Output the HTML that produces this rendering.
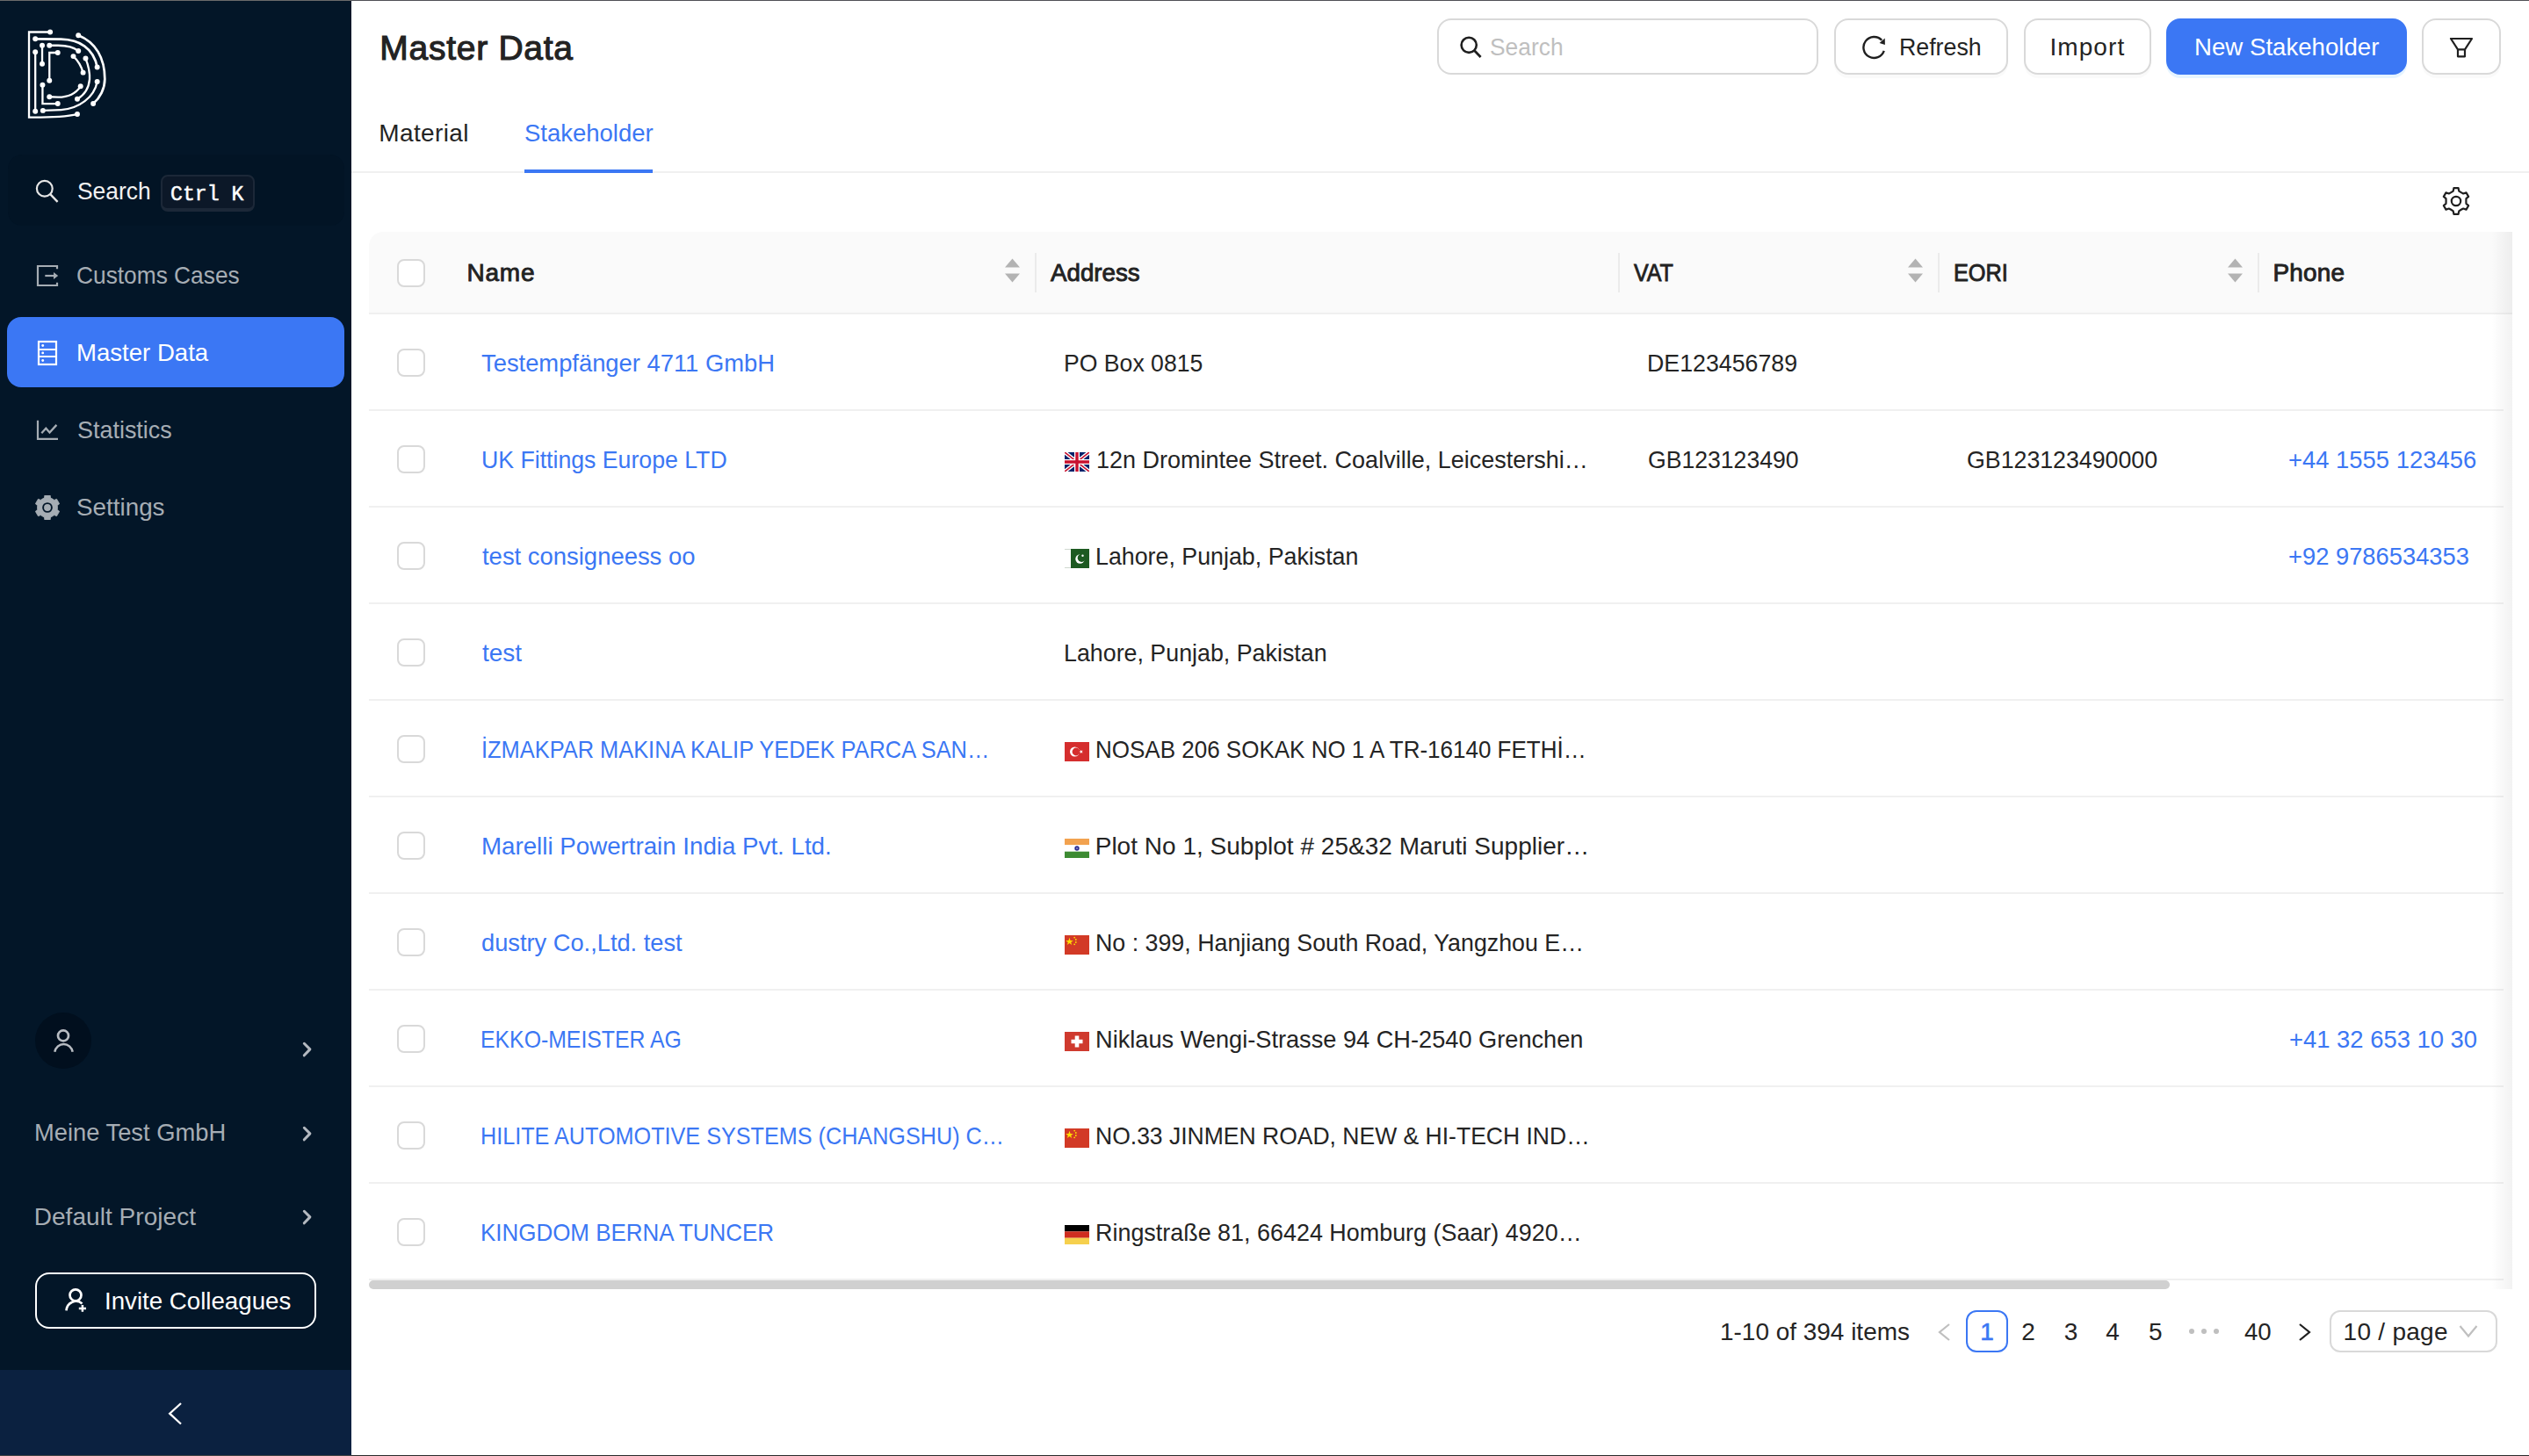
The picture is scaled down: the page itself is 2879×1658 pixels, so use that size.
<!DOCTYPE html>
<html><head><meta charset="utf-8"><title>Master Data</title>
<style>
html,body{margin:0;padding:0;width:2879px;height:1658px;overflow:hidden;background:#fff;}
body{position:relative;font-family:"Liberation Sans",sans-serif;}
.a{position:absolute;}
.t{position:absolute;white-space:nowrap;}
svg.a{display:block;}
</style></head><body>
<div class="a" style="left:0px;top:0px;width:400px;height:1658px;background:#031628;"></div>
<svg class="a" style="left:20px;top:20px;" width="120" height="120" viewBox="0 0 1456 1456"><g fill="none" stroke="#fff" stroke-width="28"><path d="M450 200 L158 200 L158 1378 C 420 1380 660 1372 825 1335"/><path d="M245 295 L600 300 C 850 305 1050 420 1100 685" stroke-width="33"/><path d="M840 245 C 1080 340 1205 560 1205 850 C 1205 980 1140 1110 1045 1190" stroke-width="33"/><path d="M245 475 L245 1295"/><path d="M340 385 L340 640"/><path d="M440 385 L560 385 C 680 385 780 410 840 462"/><path d="M555 485 L440 485 L440 870"/><path d="M770 535 C 830 590 880 670 905 760"/><path d="M940 565 C 985 680 1000 760 995 850 C 985 970 920 1070 825 1125"/><path d="M350 1285 L600 1275 C 850 1260 1060 1100 1100 885"/><path d="M345 930 L345 1190 L555 1190"/><path d="M440 1095 L560 1100 C 700 1100 810 1040 870 950"/></g><g fill="#fff"><circle cx="450" cy="200" r="36"/><circle cx="825" cy="1335" r="36"/><circle cx="245" cy="295" r="36"/><circle cx="1100" cy="685" r="36"/><circle cx="840" cy="245" r="36"/><circle cx="1045" cy="1190" r="36"/><circle cx="245" cy="475" r="36"/><circle cx="245" cy="1295" r="36"/><circle cx="340" cy="385" r="36"/><circle cx="340" cy="640" r="36"/><circle cx="440" cy="385" r="36"/><circle cx="840" cy="462" r="36"/><circle cx="555" cy="485" r="36"/><circle cx="440" cy="870" r="36"/><circle cx="770" cy="535" r="36"/><circle cx="905" cy="760" r="36"/><circle cx="940" cy="565" r="36"/><circle cx="825" cy="1125" r="36"/><circle cx="350" cy="1285" r="36"/><circle cx="1100" cy="885" r="36"/><circle cx="345" cy="930" r="36"/><circle cx="555" cy="1190" r="36"/><circle cx="440" cy="1095" r="36"/><circle cx="870" cy="950" r="36"/></g></svg>
<div class="a" style="left:9px;top:176px;width:383px;height:81px;background:#021425;border-radius:16px;"></div>
<svg class="a" style="left:38px;top:202px;" width="32" height="32" viewBox="0 0 32 32"><circle cx="12.8" cy="12.8" r="8.9" fill="none" stroke="#e6e6e6" stroke-width="2.2"/><path d="M19.2 19.2 L27.6 27.8" stroke="#e6e6e6" stroke-width="2.4"/></svg>
<div class="t" style="left:87.5px;top:197.60px;font-size:28px;line-height:40px;color:#f2f2f2;transform:scaleX(0.9436);transform-origin:0 0;">Search</div>
<div class="a" style="left:183px;top:199px;width:107px;height:42px;background:#0c1828;border:2px solid #1c2838;border-bottom-width:4px;border-radius:8px;box-sizing:border-box;"></div>
<div class="t" style="left:194.22px;top:201.80px;font-size:23.5px;line-height:40px;color:#ffffff;font-family:'Liberation Mono', monospace;-webkit-text-stroke:0.5px #fff;transform:scaleX(0.9845);transform-origin:0 0;">Ctrl K</div>
<svg class="a" style="left:40px;top:300px;" width="28" height="28" viewBox="0 0 28 28"><path d="M25 6.2 V3 H3 V25 H25 V21.8" fill="none" stroke="#a6adb4" stroke-width="2.2"/><path d="M11.3 14 H22" stroke="#a6adb4" stroke-width="2.2"/><path d="M21 10 L26.2 14 L21 18 Z" fill="#a6adb4"/></svg>
<div class="t" style="left:87.26px;top:294.00px;font-size:28px;line-height:40px;color:#a6adb4;transform:scaleX(0.9396);transform-origin:0 0;">Customs Cases</div>
<div class="a" style="left:8px;top:361px;width:384px;height:80px;background:#3b77f4;border-radius:16px;"></div>
<svg class="a" style="left:40px;top:385px;" width="28" height="34" viewBox="0 0 28 34"><rect x="4" y="4" width="20" height="26" fill="none" stroke="#fff" stroke-width="2.2"/><path d="M4 12.9 H24 M4 21.1 H24" stroke="#fff" stroke-width="2"/><circle cx="8.7" cy="8.5" r="1.4" fill="#fff"/><circle cx="8.7" cy="16.9" r="1.4" fill="#fff"/><circle cx="8.7" cy="25.5" r="1.4" fill="#fff"/></svg>
<div class="t" style="left:87.14px;top:382.00px;font-size:28px;line-height:40px;color:#ffffff;transform:scaleX(0.9847);transform-origin:0 0;">Master Data</div>
<svg class="a" style="left:40px;top:476px;" width="28" height="28" viewBox="0 0 28 28"><path d="M3 2.8 V23.8 H26" fill="none" stroke="#a6adb4" stroke-width="2.2"/><path d="M7.3 17.2 L12.3 11.8 L16.5 16.5 L24.4 7.9" fill="none" stroke="#a6adb4" stroke-width="2.3"/></svg>
<div class="t" style="left:87.53px;top:470.00px;font-size:28px;line-height:40px;color:#a6adb4;transform:scaleX(0.9618);transform-origin:0 0;">Statistics</div>
<svg class="a" style="left:40px;top:564px;" width="28" height="28" viewBox="0 0 28 28"><path d="M10.40 3.00 L10.90 -0.00 L17.10 0.00 L17.60 3.00 Q19.80 3.95 21.73 5.38 L24.57 4.32 L27.67 9.68 L25.33 11.62 Q25.60 14.00 25.33 16.38 L27.67 18.32 L24.57 23.68 L21.73 22.62 Q19.80 24.05 17.60 25.00 L17.10 28.00 L10.90 28.00 L10.40 25.00 Q8.20 24.05 6.27 22.62 L3.43 23.68 L0.33 18.32 L2.67 16.38 Q2.40 14.00 2.67 11.62 L0.33 9.68 L3.43 4.32 L6.27 5.38 Q8.20 3.95 10.40 3.00 Z" fill="#a6adb4" stroke="#a6adb4" stroke-width="0.8" stroke-linejoin="round"/><circle cx="14" cy="14" r="4.9" fill="none" stroke="#031628" stroke-width="1.9"/></svg>
<div class="t" style="left:87.49px;top:558.00px;font-size:28px;line-height:40px;color:#a6adb4;transform:scaleX(0.9935);transform-origin:0 0;">Settings</div>
<div class="a" style="left:40px;top:1153px;width:64px;height:64px;background:#010f1e;border-radius:50%;"></div>
<svg class="a" style="left:56px;top:1168px;" width="32" height="32" viewBox="0 0 32 32"><circle cx="16" cy="11.4" r="6.0" fill="none" stroke="#b8bcc2" stroke-width="2.7"/><path d="M6.3 29.7 A 10.5 11.5 0 0 1 26.7 29.7" fill="none" stroke="#b8bcc2" stroke-width="2.6"/></svg>
<svg class="a" style="left:343px;top:1184.5px;" width="14" height="20" viewBox="0 0 14 20"><path d="M3.3 3.3 L9.9 9.9 L3.3 16.8" fill="none" stroke="#b4b9c0" stroke-width="3" stroke-linecap="round" stroke-linejoin="round"/></svg>
<div class="t" style="left:39.26px;top:1270.00px;font-size:28px;line-height:40px;color:#a6adb4;transform:scaleX(0.9758);transform-origin:0 0;">Meine Test GmbH</div>
<svg class="a" style="left:343px;top:1280.5px;" width="14" height="20" viewBox="0 0 14 20"><path d="M3.3 3.3 L9.9 9.9 L3.3 16.8" fill="none" stroke="#b4b9c0" stroke-width="3" stroke-linecap="round" stroke-linejoin="round"/></svg>
<div class="t" style="left:38.7px;top:1366.00px;font-size:28px;line-height:40px;color:#a6adb4;letter-spacing:0.047px;">Default Project</div>
<svg class="a" style="left:343px;top:1376.3px;" width="14" height="20" viewBox="0 0 14 20"><path d="M3.3 3.3 L9.9 9.9 L3.3 16.8" fill="none" stroke="#b4b9c0" stroke-width="3" stroke-linecap="round" stroke-linejoin="round"/></svg>
<div class="a" style="left:40px;top:1449px;width:320px;height:64px;border:2px solid #fff;border-radius:16px;box-sizing:border-box;"></div>
<svg class="a" style="left:70px;top:1464px;" width="32" height="32" viewBox="0 0 32 32"><circle cx="16" cy="10.8" r="6.5" fill="none" stroke="#fff" stroke-width="2.7"/><path d="M5.5 28.4 A 11 11.5 0 0 1 23.5 20.4" fill="none" stroke="#fff" stroke-width="2.7"/><path d="M23.9 22 V29.8 M19.8 26 H28" stroke="#fff" stroke-width="2.5"/></svg>
<div class="t" style="left:118.65px;top:1462.00px;font-size:28px;line-height:40px;color:#ffffff;transform:scaleX(0.9881);transform-origin:0 0;">Invite Colleagues</div>
<div class="a" style="left:0px;top:1560px;width:400px;height:98px;background:#0b2140;"></div>
<svg class="a" style="left:188px;top:1594px;" width="22" height="32" viewBox="0 0 22 32"><path d="M18 4 L5.2 15.7 L18 27.5" fill="none" stroke="#fff" stroke-width="2.3"/></svg>
<div class="a" style="left:400px;top:0px;width:2479px;height:1658px;background:#fff;"></div>
<div class="t" style="left:432.3px;top:26.80px;font-size:39px;line-height:56px;color:#242424;letter-spacing:0.729px;-webkit-text-stroke:1.1px #1f1f1f;">Master Data</div>
<div class="a" style="left:1636px;top:21px;width:434px;height:64px;border:2px solid #d9d9d9;border-radius:16px;box-sizing:border-box;"></div>
<svg class="a" style="left:1658px;top:38px;" width="32" height="32" viewBox="0 0 32 32"><circle cx="14.2" cy="13.3" r="8.6" fill="none" stroke="#1f1f1f" stroke-width="2.6"/><path d="M20.4 19.6 L27.6 26.9" stroke="#1f1f1f" stroke-width="2.8"/></svg>
<div class="t" style="left:1695.8px;top:33.60px;font-size:28px;line-height:40px;color:#bfbfbf;transform:scaleX(0.9425);transform-origin:0 0;">Search</div>
<div class="a" style="left:2088px;top:21px;width:198px;height:64px;border:2px solid #d9d9d9;border-radius:16px;box-sizing:border-box;background:#fff;box-shadow:0 4px 0 rgba(0,0,0,0.02);"></div>
<svg class="a" style="left:2119px;top:40px;" width="28" height="28" viewBox="0 0 28 28"><path d="M25.75 17.9 A12 12 0 1 1 23.2 5.8" fill="none" stroke="#1f1f1f" stroke-width="2.4"/><path d="M26.7 3.6 L26.9 11 L20.6 8.9 Z" fill="#1f1f1f"/></svg>
<div class="t" style="left:2162.11px;top:33.60px;font-size:28px;line-height:40px;color:#242424;transform:scaleX(0.9550);transform-origin:0 0;">Refresh</div>
<div class="a" style="left:2304px;top:21px;width:145px;height:64px;border:2px solid #d9d9d9;border-radius:16px;box-sizing:border-box;background:#fff;box-shadow:0 4px 0 rgba(0,0,0,0.02);"></div>
<div class="t" style="left:2333.42px;top:33.60px;font-size:28px;line-height:40px;color:#242424;letter-spacing:1.087px;">Import</div>
<div class="a" style="left:2466px;top:21px;width:274px;height:64px;background:#3b77f4;border-radius:16px;box-shadow:0 4px 0 rgba(5,145,255,0.1);"></div>
<div class="t" style="left:2497.93px;top:33.60px;font-size:28px;line-height:40px;color:#fff;transform:scaleX(0.9869);transform-origin:0 0;">New Stakeholder</div>
<div class="a" style="left:2757px;top:21px;width:90px;height:64px;border:2px solid #d9d9d9;border-radius:16px;box-sizing:border-box;background:#fff;box-shadow:0 4px 0 rgba(0,0,0,0.02);"></div>
<svg class="a" style="left:2786px;top:40px;" width="32" height="28" viewBox="0 0 32 28"><path d="M4 4 H28 L20 16.4 V24.3 H12 V16.4 Z M12 16.4 H20" fill="none" stroke="#1f1f1f" stroke-width="2.2" stroke-linejoin="round"/></svg>
<div class="a" style="left:400px;top:195px;width:2479px;height:2px;background:#f0f0f0;"></div>
<div class="t" style="left:431.2px;top:131.80px;font-size:28px;line-height:40px;color:#242424;letter-spacing:0.398px;">Material</div>
<div class="t" style="left:596.75px;top:131.80px;font-size:28px;line-height:40px;color:#3b77f4;transform:scaleX(0.9811);transform-origin:0 0;">Stakeholder</div>
<div class="a" style="left:597px;top:193px;width:146px;height:4px;background:#3b77f4;"></div>
<svg class="a" style="left:2780px;top:213px;overflow:visible;" width="32" height="32" viewBox="0 0 32 32"><path d="M12.70 4.60 L13.40 1.20 L18.60 1.20 L19.30 4.60 Q21.65 6.21 24.22 7.44 L27.52 6.35 L30.12 10.85 L27.52 13.16 Q27.30 16.00 27.52 18.84 L30.12 21.15 L27.52 25.65 L24.22 24.56 Q21.65 25.79 19.30 27.40 L18.60 30.80 L13.40 30.80 L12.70 27.40 Q10.35 25.79 7.78 24.56 L4.48 25.65 L1.88 21.15 L4.48 18.84 Q4.70 16.00 4.48 13.16 L1.88 10.85 L4.48 6.35 L7.78 7.44 Q10.35 6.21 12.70 4.60 Z" fill="none" stroke="#1f1f1f" stroke-width="2.2" stroke-linejoin="round"/><circle cx="16" cy="16" r="5.2" fill="none" stroke="#1f1f1f" stroke-width="2.2"/></svg>
<div class="a" style="left:420px;top:264px;width:2440px;height:92px;background:#fafafa;border-top-left-radius:16px;"></div>
<div class="a" style="left:420px;top:356px;width:2440px;height:2px;background:#f0f0f0;"></div>
<div class="a" style="left:452px;top:294.5px;width:32px;height:32.0px;border:2px solid #d9d9d9;border-radius:8px;box-sizing:border-box;background:#fff;"></div>
<div class="t" style="left:531.4px;top:290.60px;font-size:28px;line-height:40px;color:#242424;letter-spacing:0.817px;-webkit-text-stroke:0.9px #1f1f1f;">Name</div>
<svg class="a" style="left:1143.5px;top:294px;" width="17" height="28" viewBox="0 0 17 28"><path d="M0 10.5 H17 L8.5 0.5 Z M0 17.5 H17 L8.5 27.5 Z" fill="#b3b3b3"/></svg>
<div class="a" style="left:1178px;top:288px;width:2px;height:45px;background:#ebebeb;"></div>
<div class="t" style="left:1196.25px;top:290.60px;font-size:28px;line-height:40px;color:#242424;-webkit-text-stroke:0.9px #1f1f1f;transform:scaleX(0.9897);transform-origin:0 0;">Address</div>
<div class="a" style="left:1842px;top:288px;width:2px;height:45px;background:#ebebeb;"></div>
<div class="t" style="left:1860.19px;top:290.60px;font-size:28px;line-height:40px;color:#242424;-webkit-text-stroke:0.9px #1f1f1f;transform:scaleX(0.8922);transform-origin:0 0;">VAT</div>
<svg class="a" style="left:2171.6px;top:294px;" width="17" height="28" viewBox="0 0 17 28"><path d="M0 10.5 H17 L8.5 0.5 Z M0 17.5 H17 L8.5 27.5 Z" fill="#b3b3b3"/></svg>
<div class="a" style="left:2206px;top:288px;width:2px;height:45px;background:#ebebeb;"></div>
<div class="t" style="left:2223.83px;top:290.60px;font-size:28px;line-height:40px;color:#242424;-webkit-text-stroke:0.9px #1f1f1f;transform:scaleX(0.9029);transform-origin:0 0;">EORI</div>
<svg class="a" style="left:2535.6px;top:294px;" width="17" height="28" viewBox="0 0 17 28"><path d="M0 10.5 H17 L8.5 0.5 Z M0 17.5 H17 L8.5 27.5 Z" fill="#b3b3b3"/></svg>
<div class="a" style="left:2570px;top:288px;width:2px;height:45px;background:#ebebeb;"></div>
<div class="t" style="left:2587.4px;top:290.60px;font-size:28px;line-height:40px;color:#242424;letter-spacing:0.194px;-webkit-text-stroke:0.9px #1f1f1f;">Phone</div>
<div class="a" style="left:420px;top:466px;width:2430px;height:2px;background:#f0f0f0;"></div>
<div class="a" style="left:452px;top:397px;width:32px;height:32px;border:2px solid #d9d9d9;border-radius:8px;box-sizing:border-box;background:#fff;"></div>
<div class="t" style="left:548.39px;top:393.60px;font-size:28px;line-height:40px;color:#3b77f4;transform:scaleX(0.9766);transform-origin:0 0;">Testempfänger 4711 GmbH</div>
<div class="t" style="left:1211.02px;top:393.60px;font-size:28px;line-height:40px;color:#242424;transform:scaleX(0.9505);transform-origin:0 0;">PO Box 0815</div>
<div class="t" style="left:1874.81px;top:393.60px;font-size:28px;line-height:40px;color:#242424;transform:scaleX(0.9554);transform-origin:0 0;">DE123456789</div>
<div class="a" style="left:420px;top:576px;width:2430px;height:2px;background:#f0f0f0;"></div>
<div class="a" style="left:452px;top:507px;width:32px;height:32px;border:2px solid #d9d9d9;border-radius:8px;box-sizing:border-box;background:#fff;"></div>
<div class="t" style="left:547.74px;top:503.60px;font-size:28px;line-height:40px;color:#3b77f4;transform:scaleX(0.9525);transform-origin:0 0;">UK Fittings Europe LTD</div>
<svg class="a" style="left:1212px;top:515px;" width="28" height="22" viewBox="0 0 28 22"><rect width="28" height="22" fill="#012169"/><path d="M0 0L28 22M28 0L0 22" stroke="#fff" stroke-width="4.4"/><path d="M0 0L28 22M28 0L0 22" stroke="#C8102E" stroke-width="1.6"/><path d="M14 0V22M0 11H28" stroke="#fff" stroke-width="6"/><path d="M14 0V22M0 11H28" stroke="#C8102E" stroke-width="3.4"/></svg>
<div class="t" style="left:1247.54px;top:503.60px;font-size:28px;line-height:40px;color:#242424;transform:scaleX(0.9642);transform-origin:0 0;">12n Dromintee Street. Coalville, Leicestershi…</div>
<div class="t" style="left:1875.66px;top:503.60px;font-size:28px;line-height:40px;color:#242424;transform:scaleX(0.9500);transform-origin:0 0;">GB123123490</div>
<div class="t" style="left:2239.46px;top:503.60px;font-size:28px;line-height:40px;color:#242424;transform:scaleX(0.9550);transform-origin:0 0;">GB123123490000</div>
<div class="t" style="left:2605.26px;top:503.60px;font-size:28px;line-height:40px;color:#3b77f4;transform:scaleX(0.9788);transform-origin:0 0;">+44 1555 123456</div>
<div class="a" style="left:420px;top:686px;width:2430px;height:2px;background:#f0f0f0;"></div>
<div class="a" style="left:452px;top:617px;width:32px;height:32px;border:2px solid #d9d9d9;border-radius:8px;box-sizing:border-box;background:#fff;"></div>
<div class="t" style="left:548.68px;top:613.60px;font-size:28px;line-height:40px;color:#3b77f4;transform:scaleX(0.9797);transform-origin:0 0;">test consigneess oo</div>
<svg class="a" style="left:1212px;top:625px;" width="28" height="22" viewBox="0 0 28 22"><rect x="0" y="0" width="28" height="22" fill="#fff"/><path d="M0 0.5H7 M0 21.5H7" stroke="#cfd8cf" stroke-width="1"/><rect x="7" width="21" height="22" fill="#1d5a21"/><circle cx="17.5" cy="11.5" r="5.2" fill="#fff"/><circle cx="19.3" cy="10.3" r="4.6" fill="#1d5a21"/><circle cx="20.5" cy="7.8" r="1.2" fill="#fff"/></svg>
<div class="t" style="left:1246.6px;top:613.60px;font-size:28px;line-height:40px;color:#242424;transform:scaleX(0.9570);transform-origin:0 0;">Lahore, Punjab, Pakistan</div>
<div class="t" style="left:2605.27px;top:613.60px;font-size:28px;line-height:40px;color:#3b77f4;transform:scaleX(0.9760);transform-origin:0 0;">+92 9786534353</div>
<div class="a" style="left:420px;top:796px;width:2430px;height:2px;background:#f0f0f0;"></div>
<div class="a" style="left:452px;top:727px;width:32px;height:32px;border:2px solid #d9d9d9;border-radius:8px;box-sizing:border-box;background:#fff;"></div>
<div class="t" style="left:548.68px;top:723.60px;font-size:28px;line-height:40px;color:#3b77f4;transform:scaleX(0.9977);transform-origin:0 0;">test</div>
<div class="t" style="left:1211.0px;top:723.60px;font-size:28px;line-height:40px;color:#242424;transform:scaleX(0.9574);transform-origin:0 0;">Lahore, Punjab, Pakistan</div>
<div class="a" style="left:420px;top:906px;width:2430px;height:2px;background:#f0f0f0;"></div>
<div class="a" style="left:452px;top:837px;width:32px;height:32px;border:2px solid #d9d9d9;border-radius:8px;box-sizing:border-box;background:#fff;"></div>
<div class="t" style="left:547.56px;top:833.60px;font-size:28px;line-height:40px;color:#3b77f4;transform:scaleX(0.9073);transform-origin:0 0;">İZMAKPAR MAKINA KALIP YEDEK PARCA SAN…</div>
<svg class="a" style="left:1212px;top:845px;" width="28" height="22" viewBox="0 0 28 22"><rect width="28" height="22" fill="#d52e2e"/><circle cx="11.5" cy="11" r="5.5" fill="#fff"/><circle cx="13" cy="11" r="4.4" fill="#d52e2e"/><path d="M16.2 11 L20.8 9.4 L18 13.2 L18 8.8 L20.8 12.6 Z" fill="#fff"/></svg>
<div class="t" style="left:1246.87px;top:833.60px;font-size:28px;line-height:40px;color:#242424;transform:scaleX(0.9285);transform-origin:0 0;">NOSAB 206 SOKAK NO 1 A TR-16140 FETHİ…</div>
<div class="a" style="left:420px;top:1016px;width:2430px;height:2px;background:#f0f0f0;"></div>
<div class="a" style="left:452px;top:947px;width:32px;height:32px;border:2px solid #d9d9d9;border-radius:8px;box-sizing:border-box;background:#fff;"></div>
<div class="t" style="left:547.63px;top:943.60px;font-size:28px;line-height:40px;color:#3b77f4;transform:scaleX(0.9892);transform-origin:0 0;">Marelli Powertrain India Pvt. Ltd.</div>
<svg class="a" style="left:1212px;top:955px;" width="28" height="22" viewBox="0 0 28 22"><rect width="28" height="7.3" fill="#f2a24f"/><rect y="7.3" width="28" height="7.4" fill="#fff"/><rect y="14.7" width="28" height="7.3" fill="#3d8b33"/><circle cx="14" cy="11" r="2.7" fill="#2d2d8f"/><circle cx="14" cy="11" r="1.0" fill="#8f8fd0"/></svg>
<div class="t" style="left:1246.7px;top:943.60px;font-size:28px;line-height:40px;color:#242424;letter-spacing:0.015px;">Plot No 1, Subplot # 25&amp;32 Maruti Supplier…</div>
<div class="a" style="left:420px;top:1126px;width:2430px;height:2px;background:#f0f0f0;"></div>
<div class="a" style="left:452px;top:1057px;width:32px;height:32px;border:2px solid #d9d9d9;border-radius:8px;box-sizing:border-box;background:#fff;"></div>
<div class="t" style="left:547.86px;top:1053.60px;font-size:28px;line-height:40px;color:#3b77f4;transform:scaleX(0.9730);transform-origin:0 0;">dustry Co.,Ltd. test</div>
<svg class="a" style="left:1212px;top:1065px;" width="28" height="22" viewBox="0 0 28 22"><rect width="28" height="22" fill="#d23a26"/><path d="M5.5 2.8 L6.6 6 L9.8 6 L7.2 7.9 L8.2 11 L5.5 9.1 L2.8 11 L3.8 7.9 L1.2 6 L4.4 6 Z" fill="#ffde00"/><circle cx="11.2" cy="2.6" r="0.9" fill="#ffde00"/><circle cx="12.8" cy="5" r="0.9" fill="#ffde00"/><circle cx="12.8" cy="8" r="0.9" fill="#ffde00"/><circle cx="11.2" cy="10.3" r="0.9" fill="#ffde00"/></svg>
<div class="t" style="left:1246.8px;top:1053.60px;font-size:28px;line-height:40px;color:#242424;transform:scaleX(0.9567);transform-origin:0 0;">No : 399, Hanjiang South Road, Yangzhou E…</div>
<div class="a" style="left:420px;top:1236px;width:2430px;height:2px;background:#f0f0f0;"></div>
<div class="a" style="left:452px;top:1167px;width:32px;height:32px;border:2px solid #d9d9d9;border-radius:8px;box-sizing:border-box;background:#fff;"></div>
<div class="t" style="left:547.47px;top:1163.60px;font-size:28px;line-height:40px;color:#3b77f4;transform:scaleX(0.8860);transform-origin:0 0;">EKKO-MEISTER AG</div>
<svg class="a" style="left:1212px;top:1175px;" width="28" height="22" viewBox="0 0 28 22"><rect width="28" height="22" fill="#cf3a2e"/><path d="M11.7 4.5 H16.3 V8.7 H20.5 V13.3 H16.3 V17.5 H11.7 V13.3 H7.5 V8.7 H11.7 Z" fill="#fff"/></svg>
<div class="t" style="left:1246.77px;top:1163.60px;font-size:28px;line-height:40px;color:#242424;transform:scaleX(0.9707);transform-origin:0 0;">Niklaus Wengi-Strasse 94 CH-2540 Grenchen</div>
<div class="t" style="left:2605.56px;top:1163.60px;font-size:28px;line-height:40px;color:#3b77f4;transform:scaleX(0.9787);transform-origin:0 0;">+41 32 653 10 30</div>
<div class="a" style="left:420px;top:1346px;width:2430px;height:2px;background:#f0f0f0;"></div>
<div class="a" style="left:452px;top:1277px;width:32px;height:32px;border:2px solid #d9d9d9;border-radius:8px;box-sizing:border-box;background:#fff;"></div>
<div class="t" style="left:547.43px;top:1273.60px;font-size:28px;line-height:40px;color:#3b77f4;transform:scaleX(0.8999);transform-origin:0 0;">HILITE AUTOMOTIVE SYSTEMS (CHANGSHU) C…</div>
<svg class="a" style="left:1212px;top:1285px;" width="28" height="22" viewBox="0 0 28 22"><rect width="28" height="22" fill="#d23a26"/><path d="M5.5 2.8 L6.6 6 L9.8 6 L7.2 7.9 L8.2 11 L5.5 9.1 L2.8 11 L3.8 7.9 L1.2 6 L4.4 6 Z" fill="#ffde00"/><circle cx="11.2" cy="2.6" r="0.9" fill="#ffde00"/><circle cx="12.8" cy="5" r="0.9" fill="#ffde00"/><circle cx="12.8" cy="8" r="0.9" fill="#ffde00"/><circle cx="11.2" cy="10.3" r="0.9" fill="#ffde00"/></svg>
<div class="t" style="left:1246.83px;top:1273.60px;font-size:28px;line-height:40px;color:#242424;transform:scaleX(0.9468);transform-origin:0 0;">NO.33 JINMEN ROAD, NEW &amp; HI-TECH IND…</div>
<div class="a" style="left:420px;top:1456px;width:2430px;height:2px;background:#f0f0f0;"></div>
<div class="a" style="left:452px;top:1387px;width:32px;height:32px;border:2px solid #d9d9d9;border-radius:8px;box-sizing:border-box;background:#fff;"></div>
<div class="t" style="left:547.37px;top:1383.60px;font-size:28px;line-height:40px;color:#3b77f4;transform:scaleX(0.9268);transform-origin:0 0;">KINGDOM BERNA TUNCER</div>
<svg class="a" style="left:1212px;top:1395px;" width="28" height="22" viewBox="0 0 28 22"><rect width="28" height="7.3" fill="#000"/><rect y="7.3" width="28" height="7.4" fill="#cf2d20"/><rect y="14.7" width="28" height="7.3" fill="#f6d04d"/></svg>
<div class="t" style="left:1246.79px;top:1383.60px;font-size:28px;line-height:40px;color:#242424;transform:scaleX(0.9613);transform-origin:0 0;">Ringstraße 81, 66424 Homburg (Saar) 4920…</div>
<div class="a" style="left:2800px;top:264px;width:60px;height:1204px;background:linear-gradient(to right, rgba(0,0,0,0) 60%, rgba(0,0,0,0.05) 100%);"></div>
<div class="a" style="left:420px;top:1458px;width:2050px;height:10px;background:#d0d0d0;border-radius:5px;"></div>
<div class="t" style="left:1957.77px;top:1496.50px;font-size:28px;line-height:40px;color:#242424;transform:scaleX(0.9981);transform-origin:0 0;">1-10 of 394 items</div>
<svg class="a" style="left:2204px;top:1505px;" width="18" height="24" viewBox="0 0 18 24"><path d="M15 3 L4 12 L15 21" fill="none" stroke="#bfbfbf" stroke-width="2.2"/></svg>
<div class="a" style="left:2238px;top:1492px;width:48px;height:48px;border:2px solid #3b77f4;border-radius:12px;box-sizing:border-box;"></div>
<div class="t" style="left:2238px;top:1496.50px;font-size:28px;line-height:40px;color:#3b77f4;width:48px;text-align:center;-webkit-text-stroke:0.6px #3b77f4;">1</div>
<div class="t" style="left:2301.29px;top:1496.50px;font-size:28px;line-height:40px;color:#242424;letter-spacing:0px;">2</div>
<div class="t" style="left:2349.73px;top:1496.50px;font-size:28px;line-height:40px;color:#242424;letter-spacing:0px;">3</div>
<div class="t" style="left:2397.36px;top:1496.50px;font-size:28px;line-height:40px;color:#242424;letter-spacing:0px;">4</div>
<div class="t" style="left:2445.88px;top:1496.50px;font-size:28px;line-height:40px;color:#242424;letter-spacing:0px;">5</div>
<svg class="a" style="left:2490px;top:1510px;" width="40" height="12" viewBox="0 0 40 12"><circle cx="5" cy="6" r="3" fill="#bfbfbf"/><circle cx="19" cy="6" r="3" fill="#bfbfbf"/><circle cx="33" cy="6" r="3" fill="#bfbfbf"/></svg>
<div class="t" style="left:2555.37px;top:1496.50px;font-size:28px;line-height:40px;color:#242424;transform:scaleX(0.9861);transform-origin:0 0;">40</div>
<svg class="a" style="left:2614px;top:1505px;" width="18" height="24" viewBox="0 0 18 24"><path d="M4 3 L15 12 L4 21" fill="none" stroke="#1f1f1f" stroke-width="2.2"/></svg>
<div class="a" style="left:2652px;top:1492px;width:191px;height:48px;border:2px solid #d9d9d9;border-radius:12px;box-sizing:border-box;"></div>
<div class="t" style="left:2667.57px;top:1496.50px;font-size:28px;line-height:40px;color:#242424;letter-spacing:0.276px;">10 / page</div>
<svg class="a" style="left:2797px;top:1506px;" width="26" height="20" viewBox="0 0 26 20"><path d="M3.5 4 L13 15.5 L22.5 4" fill="none" stroke="#bfbfbf" stroke-width="2.2"/></svg>
<div class="a" style="left:0px;top:0px;width:400px;height:1px;background:#6b6b6b;"></div>
<div class="a" style="left:400px;top:0px;width:2479px;height:1px;background:#505055;"></div>
<div class="a" style="left:0px;top:1657px;width:400px;height:1px;background:#444;"></div>
<div class="a" style="left:400px;top:1657px;width:2479px;height:1px;background:#2a2a2a;"></div>
</body></html>
